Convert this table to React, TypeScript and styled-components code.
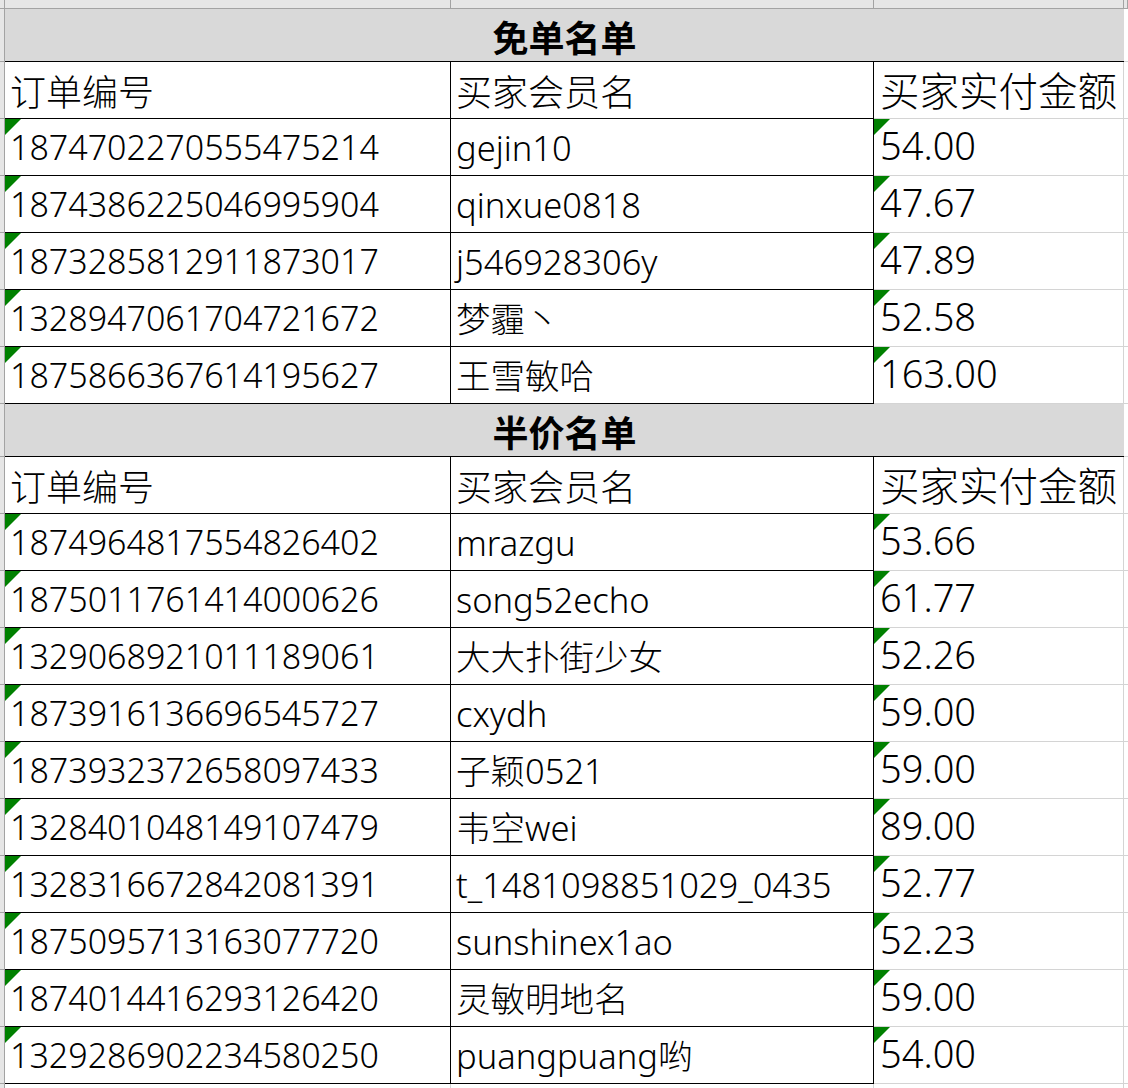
import React from 'react';
import styled, { createGlobalStyle, css } from 'styled-components';

const Global = createGlobalStyle`
  html, body { margin: 0; padding: 0; overflow: hidden; background: #ffffff; }
  body { font-family: "Noto Sans", "Noto Sans CJK SC", sans-serif; color: #000; }
`;

const COLS = '5px 446px 423px 250px 1fr';
const GRID = '#d4d4d4';
const HEAD_LINE = '#a3a3a3';

const Sheet = styled.div`
  width: 1128px;
  height: 1088px;
  overflow: hidden;
  display: flex;
  flex-direction: column;
`;

const Row = styled.div<{ $h: number }>`
  display: grid;
  grid-template-columns: ${COLS};
  height: ${(p) => p.$h}px;
  flex: none;
`;

const RowHead = styled.div`
  box-sizing: border-box;
  background: #e6e6e6;
  border-right: 1px solid ${HEAD_LINE};
  border-bottom: 1px solid ${HEAD_LINE};
`;

const ColHead = styled.div`
  box-sizing: border-box;
  background: #e6e6e6;
  border-right: 1px solid ${HEAD_LINE};
  border-bottom: 1px solid ${HEAD_LINE};
  overflow: hidden;
  display: flex;
  justify-content: center;
  align-items: flex-end;
`;

const ColLetter = styled.span`
  font-family: "Noto Sans", sans-serif;
  font-size: 36px;
  line-height: 36px;
  margin-bottom: 3px;
  color: #1a1a1a;
`;

const TitleCell = styled.div`
  grid-column: span 3;
  box-sizing: border-box;
  background: #d9d9d9;
  border-bottom: 1px solid #000;
  display: flex;
  align-items: center;
  justify-content: center;
  font-family: "Noto Sans CJK SC", sans-serif;
  font-weight: 700;
  font-size: 36px;
  line-height: 1;
  padding-top: 1px;
`;

const Filler = styled.div`
  box-sizing: border-box;
  background: #fff;
  border-bottom: 1px solid ${GRID};
`;

const Cell = styled.div<{ $boxed?: boolean; $size: number; $lift: number; $flag?: boolean; $pad?: number }>`
  position: relative;
  box-sizing: border-box;
  display: flex;
  align-items: flex-end;
  white-space: nowrap;
  font-size: ${(p) => p.$size}px;
  font-weight: 300;
  line-height: 1.2;
  padding: 0 0 ${(p) => (p.$lift - 0.212 * p.$size).toFixed(2)}px ${(p) => p.$pad ?? 5}px;
  border-right: 1px solid ${(p) => (p.$boxed ? '#000' : GRID)};
  border-bottom: 1px solid ${(p) => (p.$boxed ? '#000' : GRID)};
  ${(p) =>
    p.$flag &&
    css`
      &::before {
        content: '';
        position: absolute;
        top: 0;
        left: 0;
        width: 0;
        height: 0;
        border-top: 16px solid #008000;
        border-right: 16px solid transparent;
      }
    `}
`;

type Rec = [string, string, string];

const free: Rec[] = [
  ['1874702270555475214', 'gejin10', '54.00'],
  ['1874386225046995904', 'qinxue0818', '47.67'],
  ['1873285812911873017', 'j546928306y', '47.89'],
  ['1328947061704721672', '梦霾丶', '52.58'],
  ['1875866367614195627', '王雪敏哈', '163.00'],
];

const half: Rec[] = [
  ['1874964817554826402', 'mrazgu', '53.66'],
  ['1875011761414000626', 'song52echo', '61.77'],
  ['1329068921011189061', '大大扑街少女', '52.26'],
  ['1873916136696545727', 'cxydh', '59.00'],
  ['1873932372658097433', '子颖0521', '59.00'],
  ['1328401048149107479', '韦空wei', '89.00'],
  ['1328316672842081391', 't_1481098851029_0435', '52.77'],
  ['1875095713163077720', 'sunshinex1ao', '52.23'],
  ['1874014416293126420', '灵敏明地名', '59.00'],
  ['1329286902234580250', 'puangpuang哟', '54.00'],
];

const Section: React.FC<{ title: string; rows: Rec[] }> = ({ title, rows }) => (
  <>
    <Row $h={53}>
      <RowHead />
      <TitleCell>{title}</TitleCell>
      <Filler />
    </Row>
    <Row $h={57}>
      <RowHead />
      <Cell $boxed $size={36} $lift={11}>订单编号</Cell>
      <Cell $boxed $size={36} $lift={11}>买家会员名</Cell>
      <Cell $size={39.5} $lift={11} $pad={6}>买家实付金额</Cell>
      <Filler />
    </Row>
    {rows.map(([id, name, amt]) => (
      <Row $h={57} key={id}>
        <RowHead />
        <Cell $boxed $flag $size={34} $lift={14}>{id}</Cell>
        <Cell $boxed $size={34.5} $lift={14}>{name}</Cell>
        <Cell $flag $size={38} $lift={14} $pad={6}>{amt}</Cell>
        <Filler />
      </Row>
    ))}
  </>
);

export default function App() {
  return (
    <>
      <Global />
      <Sheet>
        <Row $h={9}>
          <RowHead />
          <ColHead><ColLetter>A</ColLetter></ColHead>
          <ColHead><ColLetter>B</ColLetter></ColHead>
          <ColHead><ColLetter>C</ColLetter></ColHead>
          <ColHead />
        </Row>
        <Section title="免单名单" rows={free} />
        <Section title="半价名单" rows={half} />
        <Row $h={57}>
          <RowHead />
          <Cell $size={34} $lift={14} />
          <Cell $size={34} $lift={14} />
          <Cell $size={34} $lift={14} />
          <Filler />
        </Row>
      </Sheet>
    </>
  );
}
